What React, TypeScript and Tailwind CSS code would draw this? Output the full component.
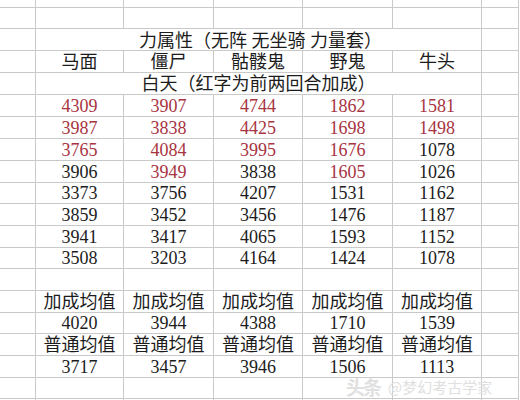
import React from 'react';

type Cell = { v: string; red?: boolean };

const font = { fontFamily: '"Liberation Serif", "Noto Sans CJK SC", serif' };

const data: Cell[][] = [
  [{ v: '4309', red: true }, { v: '3907', red: true }, { v: '4744', red: true }, { v: '1862', red: true }, { v: '1581', red: true }],
  [{ v: '3987', red: true }, { v: '3838', red: true }, { v: '4425', red: true }, { v: '1698', red: true }, { v: '1498', red: true }],
  [{ v: '3765', red: true }, { v: '4084', red: true }, { v: '3995', red: true }, { v: '1676', red: true }, { v: '1078' }],
  [{ v: '3906' }, { v: '3949', red: true }, { v: '3838' }, { v: '1605', red: true }, { v: '1026' }],
  [{ v: '3373' }, { v: '3756' }, { v: '4207' }, { v: '1531' }, { v: '1162' }],
  [{ v: '3859' }, { v: '3452' }, { v: '3456' }, { v: '1476' }, { v: '1187' }],
  [{ v: '3941' }, { v: '3417' }, { v: '4065' }, { v: '1593' }, { v: '1152' }],
  [{ v: '3508' }, { v: '3203' }, { v: '4164' }, { v: '1424' }, { v: '1078' }],
];

const headers = ['马面', '僵尸', '骷髅鬼', '野鬼', '牛头'];
const bonusAvg = ['4020', '3944', '4388', '1710', '1539'];
const normalAvg = ['3717', '3457', '3946', '1506', '1113'];

const td = 'border border-[#c9c9c9] p-0 text-center align-middle leading-none whitespace-nowrap';

function Row({ h, cells }: { h: number; cells: (Cell | string)[] }) {
  return (
    <tr style={{ height: h }}>
      <td className={td}></td>
      {cells.map((c, i) => {
        const cell = typeof c === 'string' ? { v: c } : c;
        return (
          <td key={i} className={`${td} ${cell.red ? 'text-[#a8343f]' : 'text-[#1c1c1c]'}`}>
            {cell.v}
          </td>
        );
      })}
      <td className={td}></td>
    </tr>
  );
}

function EmptyRow({ h }: { h: number }) {
  return <Row h={h} cells={['', '', '', '', '']} />;
}

export default function App() {
  const dataHeights = [22, 22, 22, 22, 21, 22, 22, 21];
  return (
    <div className="relative w-[520px] h-[400px] overflow-hidden bg-white text-[18px]" style={font}>
      <table className="table-fixed border-collapse w-[520px] mt-[-1px] ml-[-1px]">
        <colgroup>
          <col className="w-[36px]" />
          <col className="w-[88px]" />
          <col className="w-[90px]" />
          <col className="w-[89px]" />
          <col className="w-[90px]" />
          <col className="w-[89px]" />
          <col />
        </colgroup>
        <tbody>
          <EmptyRow h={8} />
          <EmptyRow h={21} />
          <tr style={{ height: 22 }}>
            <td className={td}></td>
            <td colSpan={5} className={`${td} text-[#1c1c1c] pt-[3px] pl-[4px]`}>
              力属性（无阵 无坐骑 力量套）
            </td>
            <td className={td}></td>
          </tr>
          <Row h={22} cells={headers} />
          <tr style={{ height: 22 }}>
            <td className={td}></td>
            <td colSpan={5} className={`${td} text-[#1c1c1c]`}>
              白天（红字为前两回合加成）
            </td>
            <td className={td}></td>
          </tr>
          {data.map((r, i) => (
            <Row key={i} h={dataHeights[i]} cells={r} />
          ))}
          <EmptyRow h={22} />
          <Row h={22} cells={Array(5).fill('加成均值')} />
          <Row h={21} cells={bonusAvg} />
          <Row h={22} cells={Array(5).fill('普通均值')} />
          <Row h={22} cells={normalAvg} />
          <EmptyRow h={21} />
          <EmptyRow h={8} />
        </tbody>
      </table>
      <div className="absolute left-[346px] top-[377px] flex items-center gap-[8px] text-[#e0e0e0] pointer-events-none leading-none">
        <span className="text-[19px] font-bold tracking-[-2px]" style={{ fontFamily: '"Noto Sans CJK SC", sans-serif' }}>
          头条
        </span>
        <span className="text-[15px]" style={{ fontFamily: '"Noto Sans CJK SC", sans-serif' }}>
          @梦幻考古学家
        </span>
      </div>
    </div>
  );
}
